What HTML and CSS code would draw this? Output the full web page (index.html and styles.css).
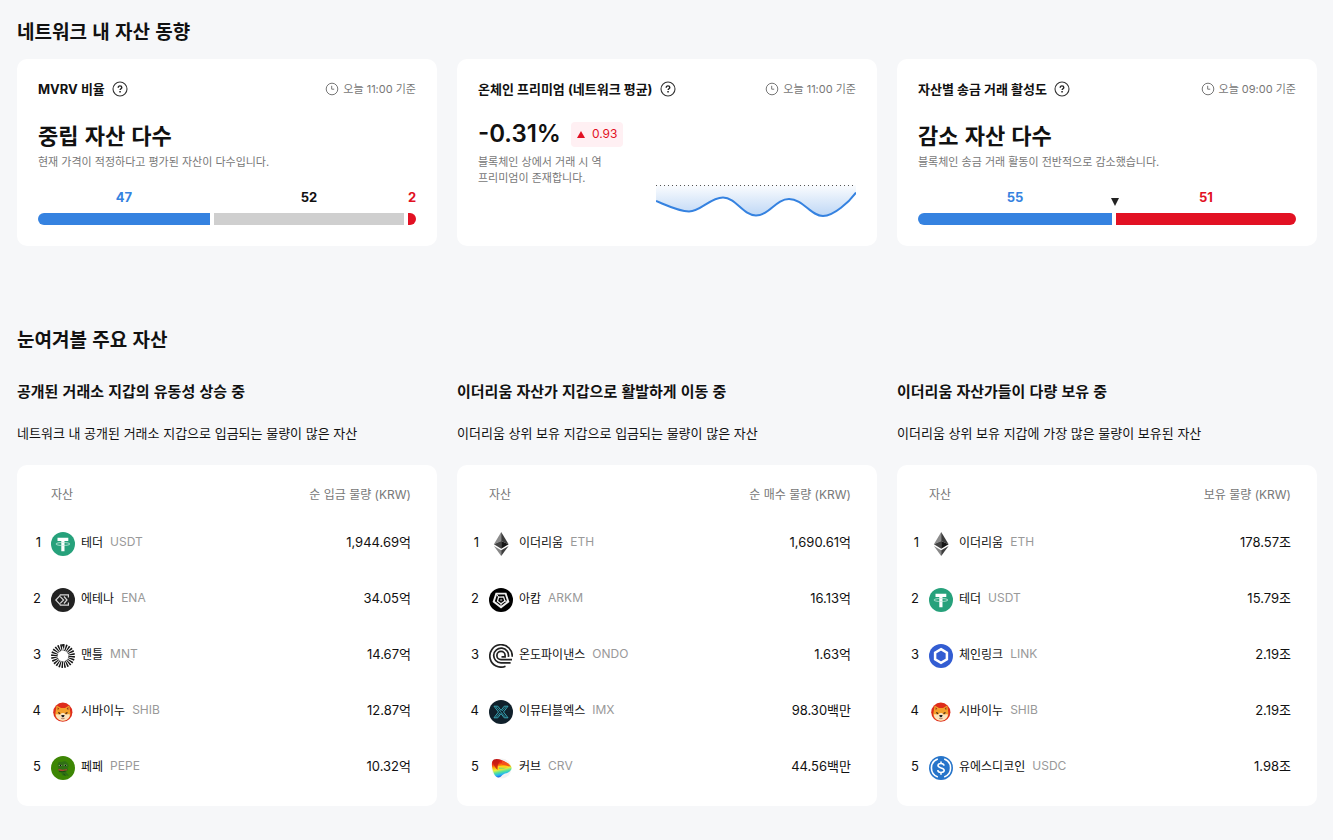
FILE: index.html
```html
<!DOCTYPE html>
<html lang="ko">
<head>
<meta charset="utf-8">
<meta name="viewport" content="width=device-width, initial-scale=1">
<title>네트워크 내 자산 동향</title>
<link rel="stylesheet" href="styles.css">
</head>
<body>
<svg class="sprite" aria-hidden="true">
  <defs>
    <linearGradient id="crv-g" x1="0.1" y1="0" x2="0.35" y2="1">
      <stop offset="0" stop-color="#b30d12"/><stop offset="0.28" stop-color="#f0301a"/><stop offset="0.45" stop-color="#ffb000"/><stop offset="0.6" stop-color="#e9f03a"/><stop offset="0.75" stop-color="#4fe0a0"/><stop offset="0.88" stop-color="#23b5f5"/><stop offset="1" stop-color="#2458e0"/>
    </linearGradient>
    <linearGradient id="fill-g" x1="0" y1="0" x2="0" y2="1">
      <stop offset="0" stop-color="#3582e0" stop-opacity="0.02"/><stop offset="1" stop-color="#3582e0" stop-opacity="0.32"/>
    </linearGradient>
  </defs>
  <symbol id="help" viewBox="0 0 16 16">
    <circle cx="8" cy="8" r="7" fill="none" stroke="#333" stroke-width="1.1"/>
    <path d="M6.2 6.7C6.2 5.5 7 4.9 8 4.9s1.8.6 1.8 1.6c0 1.2-1.7 1.3-1.7 2.6" fill="none" stroke="#222" stroke-width="1.4"/>
    <rect x="7.3" y="10" width="1.5" height="1.5" fill="#222"/>
  </symbol>
  <symbol id="clock" viewBox="0 0 14 14">
    <circle cx="7" cy="7" r="5.8" fill="none" stroke="#777" stroke-width="1"/>
    <path d="M6.7 3.8V7.2H9.2" fill="none" stroke="#777" stroke-width="1"/>
  </symbol>
  <symbol id="usdt" viewBox="0 0 24 24">
    <circle cx="12" cy="12" r="12" fill="#26a17b"/>
    <path d="M6.5 5.8h10.8v3.1h-3.8v10.4h-3.200V8.900H6.500z" fill="#fff"/>
    <ellipse cx="11.900" cy="12" rx="7" ry="1.500" fill="none" stroke="#c9ebdf" stroke-width=".8"/>
  </symbol>
  <symbol id="ena" viewBox="0 0 24 24">
    <circle cx="12" cy="12" r="12" fill="#222"/>
    <path d="M9.200 7.400 4.800 12l4.400 4.600M8.800 6.900h8.600v2.700M8.800 17.100h8.600v-2.700M9.200 8.600 12.600 12l-3.400 3.400M13 8.500 16 12l-3 3.500" fill="none" stroke="#d7d7d7" stroke-width="1.200"/>
  </symbol>
  <symbol id="mnt" viewBox="0 0 24 24">
    <circle cx="12" cy="12" r="8.600" fill="none" stroke="#161616" stroke-width="6.600" pathLength="48" stroke-dasharray="1.150 .850"/>
  </symbol>
  <symbol id="shib" viewBox="0 0 24 24">
    <circle cx="11.800" cy="12.200" r="9.600" fill="#de2c1b"/>
    <path d="M5.600 5.600 10 8h4l4.300-2.600 1 7.200c.6 2.500-.7 5.600-3.400 7-2.600 1.500-5.600 1.500-8.200 0-2.800-1.500-4-4.500-3.200-7.200z" fill="#f3a02b"/>
    <path d="m6.500 7.200 1.800 1.400-1.600 1.600zM17.500 7l-1.900 1.600 1.700 1.600z" fill="#9e3d17"/>
    <path d="M4.800 14.500c1.700-.6 3-.4 4.200.3l1.800-1.800h2.200l1.800 1.800c1-.7 2.400-.9 4.100-.3-.2 3.400-3 6.200-7 6.200s-6.900-2.800-7.100-6.200z" fill="#fbe3bd"/>
    <path d="m7.200 12 2.300 1-.7.9-1.500-.6zM16.500 12l-2.300 1 .7.900 1.500-.6z" fill="#2c1810"/>
    <path d="M10.200 15h3.400l-.5 1.600-1.200.8-1.200-.8z" fill="#222"/>
    <path d="M10.200 18.300q1.700 1 3.400 0" stroke="#8b5141" stroke-width=".7" fill="none"/>
  </symbol>
  <symbol id="pepe" viewBox="0 0 24 24">
    <circle cx="12" cy="12" r="12" fill="#3d8604"/>
    <path d="M6.700 9.200C6.500 6.500 8.700 5 10.800 6c1.300-1.300 5-1.300 5.800 1.200 1.700 1.800 1.100 3.400.2 4.600.8 2-.3 3.700-2 4.300l3.400 3.600-6.700-.3-1.300-2.700c-2.600-.2-3.700-2.800-2.800-4.700z" fill="#2f7014"/>
    <path d="M7.400 9.300q2-1.200 3.900.2-2 1.400-3.900-.2zM12.200 9.100q2.200-1.200 4.100.2-2 1.300-4.100-.2z" fill="#a9c58e"/>
    <path d="M8.800 8.800h1.400v1.400H8.800zM13.800 8.700h1.400v1.400h-1.400z" fill="#111"/>
    <path d="M7.400 13.500q3.700 1.700 8.500.1" fill="none" stroke="#a8452e" stroke-width="1.400"/>
    <path d="M8 15.200q3.200 1 6.600 0M12.400 18l2 1.500" fill="none" stroke="#16410f" stroke-width=".8"/>
  </symbol>
  <symbol id="eth" viewBox="0 0 24 24">
    <path d="M12.200 0v9L4.900 12.300z" fill="#8b8b8b"/><path d="M12.200 0v9l7.400 3.300z" fill="#3c3c3c"/>
    <path d="M12.200 9v7.700l-7.300-4.400z" fill="#444"/><path d="M12.200 9v7.700l7.400-4.400z" fill="#151515"/>
    <path d="M4.900 13.900l7.300 4.300V24z" fill="#888"/><path d="M19.600 13.900l-7.400 4.300V24z" fill="#3e3e3e"/>
  </symbol>
  <symbol id="arkm" viewBox="0 0 24 24">
    <circle cx="12" cy="12" r="12" fill="#000"/>
    <g fill="none" stroke="#eee" stroke-width="1.900">
      <path d="M7.300 5.600h9.400l2.600 8-7.300 5.700-7.300-5.700z"/>
      <path d="m9.600 9.200 5-.2 1.300 3.900-3.900 2.900-3.500-2.600z" stroke-width="1.300"/>
      <path d="m7.300 5.600 2.300 3.600M19.300 13.600l-3.400-.7M12 19.300v-3.500" stroke-width="1"/>
    </g>
    <circle cx="12.200" cy="12" r="1.200" fill="#777"/>
  </symbol>
  <symbol id="ondo" viewBox="0 0 24 24">
    <g fill="none" stroke="#222" stroke-width="1.700">
      <path d="M16.500 22.200A11.200 11.200 0 1 1 23.200 12.800"/>
      <path d="M21.600 18.900H12A7.400 7.400 0 1 1 19.400 12.800"/>
      <path d="M23 15.600H12A4.100 4.100 0 1 1 16.100 11.500V12.800H12.500"/>
    </g>
  </symbol>
  <symbol id="imx" viewBox="0 0 24 24">
    <circle cx="12" cy="12" r="12" fill="#10202b"/>
    <path d="M5 6.200h3.800l3.200 4.200 3.200-4.200H19L14.500 12l4.500 5.800h-3.800L12 13.600l-3.200 4.200H5L9.500 12z" fill="none" stroke="#37a5b4" stroke-width="1"/>
    <path d="m7 6.800 9.800 10.700M16.800 6.800 13 11M11 13l-3.800 4.300" stroke="#37a5b4" stroke-width=".8"/>
  </symbol>
  <symbol id="crv" viewBox="0 0 24 24">
    <circle cx="12.500" cy="12.500" r="10" fill="#f3f3f3"/>
    <path d="M3.200 5.500C4.500 2.200 9 2.500 13 4.200c4.200 1.700 9 4.300 9.500 7.200.5 3.200-3 5.300-6.500 6.200-3 .8-4 4.400-7 3.900C4.500 20.800 1.900 9.600 3.200 5.500z" fill="url(#crv-g)"/>
    <path d="M8.500 10q5.500-.5 11.500 1-4.500 3.200-11.500 2.600z" fill="#ffd21f"/>
    <path d="M10 11.500q4 .2 7.500.2-3 1.400-7.500 1.300z" fill="#7fe36c"/>
    <path d="M13 4.800q7.500 2.700 8.700 6.200-4-2-8.700-2.300z" fill="#f4511e"/>
    <path d="M4 5.500C5 3.500 9 3.500 11 5.500 9 7 8.500 10 8.500 14 5.500 11 4 8 4 5.500z" fill="#c31a12" opacity=".8"/>
  </symbol>
  <symbol id="link" viewBox="0 0 24 24">
    <circle cx="12" cy="12" r="12" fill="#335dd2"/>
    <path d="m12 5.200 5.900 3.400v6.800L12 18.800l-5.900-3.400V8.600z" fill="none" stroke="#fff" stroke-width="2.500"/>
  </symbol>
  <symbol id="usdc" viewBox="0 0 24 24">
    <circle cx="12" cy="12" r="12" fill="#2775ca"/>
    <path d="M8.800 3.100a9.400 9.400 0 0 0 0 17.800M15.200 3.100a9.400 9.400 0 0 1 0 17.800" fill="none" stroke="#fff" stroke-width="1.600"/>
    <path d="M15.100 9.700c-.2-1.500-1.300-2.200-3.100-2.200-1.900 0-3 .8-3 2.100 0 3.100 6.200 1.500 6.200 4.700 0 1.400-1.200 2.200-3.200 2.200s-3.100-.8-3.300-2.300M12 5.400v2.200M12 16.400v2.300" fill="none" stroke="#fff" stroke-width="1.600"/>
  </symbol>
</svg>

<main class="page">
  <section>
    <h2 class="section-title">네트워크 내 자산 동향</h2>
    <div class="grid">
      <article class="card">
        <header class="card-head">
          <h3 class="card-title">MVRV 비율</h3>
          <button class="help" type="button" aria-label="MVRV 비율 설명"><svg><use href="#help"/></svg></button>
          <span class="time"><svg><use href="#clock"/></svg>오늘 11:00 기준</span>
        </header>
        <p class="headline">중립 자산 다수</p>
        <p class="note">현재 가격이 적정하다고 평가된 자산이 다수입니다.</p>
        <div class="bars">
          <div class="bar blue" style="flex-grow:47"><span>47</span><i></i></div>
          <div class="bar gray" style="flex-grow:52"><span>52</span><i></i></div>
          <div class="bar red" style="flex-grow:2"><span>2</span><i></i></div>
        </div>
      </article>
      <article class="card">
        <header class="card-head">
          <h3 class="card-title">온체인 프리미엄 (네트워크 평균)</h3>
          <button class="help" type="button" aria-label="온체인 프리미엄 설명"><svg><use href="#help"/></svg></button>
          <span class="time"><svg><use href="#clock"/></svg>오늘 11:00 기준</span>
        </header>
        <div class="split">
          <div>
            <p class="headline figure">-0.31% <span class="change"><svg viewBox="0 0 8 7"><path d="M4 0l4 7H0z" fill="#e21123"/></svg>0.93</span></p>
            <p class="note">블록체인 상에서 거래 시 역<br>프리미엄이 존재합니다.</p>
          </div>
          <svg class="chart" viewBox="0 0 200 41">
            <path d="M0 1V17C10 21 23 27.500 33 27.500 45 27.500 54 13.500 67 13.500 80 13.500 87 31.500 100 31.500 113 31.500 120 15 133 15 147 15 155 32 167 32 178 32 193 18 200 8.500V1z" fill="url(#fill-g)"/>
            <path d="M0 17C10 21 23 27.500 33 27.500 45 27.500 54 13.500 67 13.500 80 13.500 87 31.500 100 31.500 113 31.500 120 15 133 15 147 15 155 32 167 32 178 32 193 18 200 8.500" fill="none" stroke="#3582e0" stroke-width="2"/>
            <path d="M0 1.500H200" stroke="#555" stroke-dasharray="1 3"/>
          </svg>
        </div>
      </article>
      <article class="card">
        <header class="card-head">
          <h3 class="card-title">자산별 송금 거래 활성도</h3>
          <button class="help" type="button" aria-label="송금 거래 활성도 설명"><svg><use href="#help"/></svg></button>
          <span class="time"><svg><use href="#clock"/></svg>오늘 09:00 기준</span>
        </header>
        <p class="headline">감소 자산 다수</p>
        <p class="note">블록체인 송금 거래 활동이 전반적으로 감소했습니다.</p>
        <div class="bars">
          <div class="bar blue" style="flex-grow:55"><span>55</span><i></i></div>
          <div class="bar red marked" style="flex-grow:51"><svg class="marker" viewBox="0 0 8 8"><path d="M0 0h8L4 8z" fill="#222"/></svg><span>51</span><i></i></div>
        </div>
      </article>
    </div>
  </section>

  <section class="picks">
    <h2 class="section-title">눈여겨볼 주요 자산</h2>
    <div class="grid">
      <section>
        <h3 class="list-title">공개된 거래소 지갑의 유동성 상승 중</h3>
        <p class="list-note">네트워크 내 공개된 거래소 지갑으로 입금되는 물량이 많은 자산</p>
        <div class="table-card">
          <table class="wide-rank">
            <thead><tr><th class="rank"></th><th>자산</th><th class="value">순 입금 물량 (KRW)</th></tr></thead>
            <tbody>
              <tr><td class="rank">1</td><td><a class="asset" href="#"><svg><use href="#usdt"/></svg>테더<small>USDT</small></a></td><td class="value">1,944.69억</td></tr>
              <tr><td class="rank">2</td><td><a class="asset" href="#"><svg><use href="#ena"/></svg>에테나<small>ENA</small></a></td><td class="value">34.05억</td></tr>
              <tr><td class="rank">3</td><td><a class="asset" href="#"><svg><use href="#mnt"/></svg>맨틀<small>MNT</small></a></td><td class="value">14.67억</td></tr>
              <tr><td class="rank">4</td><td><a class="asset" href="#"><svg><use href="#shib"/></svg>시바이누<small>SHIB</small></a></td><td class="value">12.87억</td></tr>
              <tr><td class="rank">5</td><td><a class="asset" href="#"><svg><use href="#pepe"/></svg>페페<small>PEPE</small></a></td><td class="value">10.32억</td></tr>
            </tbody>
          </table>
        </div>
      </section>
      <section>
        <h3 class="list-title">이더리움 자산가 지갑으로 활발하게 이동 중</h3>
        <p class="list-note">이더리움 상위 보유 지갑으로 입금되는 물량이 많은 자산</p>
        <div class="table-card">
          <table>
            <thead><tr><th class="rank"></th><th>자산</th><th class="value">순 매수 물량 (KRW)</th></tr></thead>
            <tbody>
              <tr><td class="rank">1</td><td><a class="asset" href="#"><svg><use href="#eth"/></svg>이더리움<small>ETH</small></a></td><td class="value">1,690.61억</td></tr>
              <tr><td class="rank">2</td><td><a class="asset" href="#"><svg><use href="#arkm"/></svg>아캄<small>ARKM</small></a></td><td class="value">16.13억</td></tr>
              <tr><td class="rank">3</td><td><a class="asset" href="#"><svg><use href="#ondo"/></svg>온도파이낸스<small>ONDO</small></a></td><td class="value">1.63억</td></tr>
              <tr><td class="rank">4</td><td><a class="asset" href="#"><svg><use href="#imx"/></svg>이뮤터블엑스<small>IMX</small></a></td><td class="value">98.30백만</td></tr>
              <tr><td class="rank">5</td><td><a class="asset" href="#"><svg><use href="#crv"/></svg>커브<small>CRV</small></a></td><td class="value">44.56백만</td></tr>
            </tbody>
          </table>
        </div>
      </section>
      <section>
        <h3 class="list-title">이더리움 자산가들이 다량 보유 중</h3>
        <p class="list-note">이더리움 상위 보유 지갑에 가장 많은 물량이 보유된 자산</p>
        <div class="table-card">
          <table>
            <thead><tr><th class="rank"></th><th>자산</th><th class="value">보유 물량 (KRW)</th></tr></thead>
            <tbody>
              <tr><td class="rank">1</td><td><a class="asset" href="#"><svg><use href="#eth"/></svg>이더리움<small>ETH</small></a></td><td class="value">178.57조</td></tr>
              <tr><td class="rank">2</td><td><a class="asset" href="#"><svg><use href="#usdt"/></svg>테더<small>USDT</small></a></td><td class="value">15.79조</td></tr>
              <tr><td class="rank">3</td><td><a class="asset" href="#"><svg><use href="#link"/></svg>체인링크<small>LINK</small></a></td><td class="value">2.19조</td></tr>
              <tr><td class="rank">4</td><td><a class="asset" href="#"><svg><use href="#shib"/></svg>시바이누<small>SHIB</small></a></td><td class="value">2.19조</td></tr>
              <tr><td class="rank">5</td><td><a class="asset" href="#"><svg><use href="#usdc"/></svg>유에스디코인<small>USDC</small></a></td><td class="value">1.98조</td></tr>
            </tbody>
          </table>
        </div>
      </section>
    </div>
  </section>
</main>
</body>
</html>
```
FILE: styles.css
```css
* { box-sizing: border-box; }
body {
  margin: 0;
  background: #f6f7f9;
  color: #111;
  font-family: Inter, "Noto Sans CJK KR", sans-serif;
  font-size: 12px;
}
h2, h3, p { margin: 0; }
svg { display: block; flex: none; }
.sprite { position: absolute; width: 0; height: 0; }

.page { padding: 17px 16px 34px 17px; }
.grid {
  display: grid;
  grid-template-columns: repeat(3, minmax(0, 1fr));
  gap: 20px;
}
.section-title {
  font: 700 19px/28px "Noto Sans CJK KR", Inter, sans-serif;
  margin-bottom: 14px;
}

.card {
  display: flex;
  flex-direction: column;
  background: #fff;
  border-radius: 10px;
  padding: 21px;
}
.card-head { display: flex; align-items: center; height: 18px; margin-bottom: 20px; }
.card-title { font-size: 13px; line-height: 18px; font-weight: 700; }
.help { margin: 0 0 0 7px; padding: 0; border: 0; background: none; }
.help svg { width: 16px; height: 16px; }
.time {
  display: flex;
  align-items: center;
  gap: 4px;
  margin-left: auto;
  color: #777;
  font-size: 11px;
  line-height: 18px;
}
.time svg { width: 14px; height: 14px; }
.headline { font: 700 22px/32px "Noto Sans CJK KR", Inter, sans-serif; }
.figure {
  display: flex;
  align-items: center;
  gap: 10px;
  font-family: Inter, sans-serif;
  font-size: 24px;
  font-weight: 600;
}
.change {
  display: flex;
  align-items: center;
  gap: 7px;
  height: 25px;
  padding: 0 6px;
  border-radius: 4px;
  background: #fff0f3;
  color: #e21123;
  font-size: 12px;
  font-weight: 400;
}
.change svg { width: 8px; height: 7px; }
.note { margin-top: 4px; color: #777; font-size: 11px; line-height: 16px; }

.bars { display: flex; gap: 4px; margin-top: auto; padding-top: 19px; }
.bar { flex: 1 1 0; min-width: 8px; text-align: center; }
.bar span { display: block; font-size: 13px; line-height: 16px; font-weight: 700; margin-bottom: 8px; }
.bar i { display: block; height: 12px; }
.bar:first-child i { border-radius: 6px 0 0 6px; }
.bar:last-child i { border-radius: 0 6px 6px 0; }
.blue { color: #3582e0; }
.red { color: #e21123; }
.blue i, .red i { background: currentColor; }
.gray i { background: #cfcfcf; }
.marked { position: relative; }
.marker { position: absolute; left: -5px; top: 9px; width: 8px; height: 8px; }

.split { display: flex; flex: 1; justify-content: space-between; }
.chart { align-self: flex-end; width: 200px; height: 41px; }

.picks { margin-top: 79px; }
.picks > .section-title { margin-bottom: 26px; }
.list-title { font: 700 15px/24px "Noto Sans CJK KR", Inter, sans-serif; }
.list-note { margin: 19px 0 21px; font-size: 13px; line-height: 22px; }
.table-card { background: #fff; border-radius: 10px; padding: 10px 0 12px; }
table { width: 100%; border-collapse: collapse; table-layout: fixed; }
th, td { height: 56px; padding: 0; text-align: left; font-weight: 400; }
thead th { height: 39px; padding-bottom: 2px; color: #777; }
th.rank, td.rank { width: 32px; padding-right: 10px; text-align: right; }
.wide-rank th.rank, .wide-rank td.rank { width: 34px; }
.value { padding: 0 26px 2px 0; text-align: right; }
td.rank, td.value { font-size: 13px; }
.asset {
  display: flex;
  align-items: center;
  padding-bottom: 2px;
  color: #111;
  text-decoration: none;
}
.asset svg { width: 24px; height: 24px; margin: 6px 6px 0 0; }
.asset small { margin-left: 7px; color: #999; font-size: 12px; }
```
